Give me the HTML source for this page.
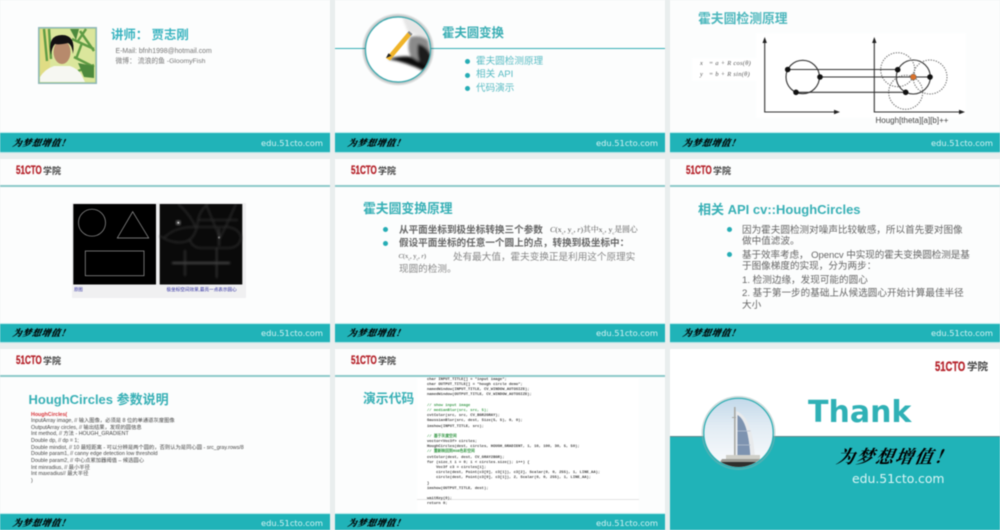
<!DOCTYPE html>
<html lang="zh"><head><meta charset="utf-8"><title>霍夫圆变换</title>
<style>
html,body{margin:0;padding:0;background:#e9eeee;width:1000px;height:530px;overflow:hidden}
#r{position:absolute;left:0;top:0;width:1000px;height:530px;overflow:hidden;filter:blur(.5px);font-family:"Liberation Sans","Noto Sans CJK SC",sans-serif}
#r div,#r svg{position:absolute}
.s{background:#fcfdfd}
.t{white-space:nowrap;line-height:1}
.f{width:330px;height:20.5px;background:#20b3b8;border-top:1px solid #c8eef0;border-bottom:1px solid #b5e3e5;box-sizing:border-box}
.u{font-family:"DejaVu Sans",sans-serif;font-size:8.3px;color:#d6f2f3;left:261px;top:5.5px;white-space:nowrap;line-height:1}
.g{font-family:"Noto Serif CJK SC",serif;font-size:9px;font-style:italic;font-weight:700;-webkit-text-stroke:.2px #000;color:#000;left:13px;top:4.5px;letter-spacing:.6px;white-space:nowrap;line-height:1;transform:skewX(-10deg)}
.l{height:2px;width:330px;background:#8cc9ca}
.h{font-weight:700;color:#38b0b6;font-size:12.8px}
.d{width:5px;height:5px;border-radius:50%;background:#26adb5}
.b{color:#666;font-size:9.6px}
.c51{color:#b5222a;font-weight:700;font-size:11.5px;-webkit-text-stroke:.3px #b5222a;transform:scaleX(.7);transform-origin:0 0;line-height:1;font-family:"Liberation Sans",sans-serif}
.cx{color:#444;font-weight:700;font-size:9px;line-height:1}
.p{font-size:5.3px;color:#444}
.m{font-family:"Liberation Mono",monospace;font-size:3.8px;color:#444;font-weight:700;white-space:pre;line-height:1;left:427px}
</style></head><body><div id="r">

<div class="s" style="left:0;top:0;width:330px;height:153px"></div>
<div class="s" style="left:335px;top:0;width:330px;height:153px"></div>
<div class="s" style="left:670px;top:0;width:330px;height:153px"></div>
<div class="s" style="left:0;top:159px;width:330px;height:184px"></div>
<div class="s" style="left:335px;top:159px;width:330px;height:184px"></div>
<div class="s" style="left:670px;top:159px;width:330px;height:184px"></div>
<div class="s" style="left:0;top:349px;width:330px;height:181px"></div>
<div class="s" style="left:335px;top:349px;width:330px;height:181px"></div>

<!-- footers -->
<div class="f" style="left:0;top:132px"><div class="t g">为梦想增值！</div><div class="u">edu.51cto.com</div></div>
<div class="f" style="left:335px;top:132px"><div class="t g">为梦想增值！</div><div class="u">edu.51cto.com</div></div>
<div class="f" style="left:670px;top:132px"><div class="t g">为梦想增值！</div><div class="u">edu.51cto.com</div></div>
<div class="f" style="left:0;top:322.5px"><div class="t g">为梦想增值！</div><div class="u">edu.51cto.com</div></div>
<div class="f" style="left:335px;top:322.5px"><div class="t g">为梦想增值！</div><div class="u">edu.51cto.com</div></div>
<div class="f" style="left:670px;top:322.5px"><div class="t g">为梦想增值！</div><div class="u">edu.51cto.com</div></div>
<div class="f" style="left:0;top:512.5px"><div class="t g">为梦想增值！</div><div class="u">edu.51cto.com</div></div>
<div class="f" style="left:335px;top:512.5px"><div class="t g">为梦想增值！</div><div class="u">edu.51cto.com</div></div>

<!-- logos + header lines -->
<div class="t c51" style="left:15.5px;top:166px">51CTO</div><div class="t cx" style="left:43px;top:167px">学院</div><div class="l" style="left:0;top:185px"></div>
<div class="t c51" style="left:350.5px;top:166px">51CTO</div><div class="t cx" style="left:378px;top:167px">学院</div><div class="l" style="left:335px;top:185px"></div>
<div class="t c51" style="left:685.5px;top:166px">51CTO</div><div class="t cx" style="left:713px;top:167px">学院</div><div class="l" style="left:670px;top:185px"></div>
<div class="t c51" style="left:15.5px;top:356px">51CTO</div><div class="t cx" style="left:43px;top:357px">学院</div><div class="l" style="left:0;top:375px"></div>
<div class="t c51" style="left:350.5px;top:356px">51CTO</div><div class="t cx" style="left:378px;top:357px">学院</div><div class="l" style="left:335px;top:375px"></div>

<!-- slide 1 -->
<svg style="left:38px;top:27px" width="59" height="57" viewBox="0 0 59 57">
<rect x=".7" y=".7" width="57.6" height="55.6" fill="#b9d48a" stroke="#8fb9b9" stroke-width="1.4"/>
<rect x="2" y="2" width="55" height="53" fill="#dbe69c"/>
<path d="M2 2h10v53H2z" fill="#e0dc84"/>
<path d="M6 2l3 32M11 2l2 30M42 4l14 20M36 30l20 10M34 12l22 10M44 16l-6 16M40 44l16-6M48 2l-8 12" stroke="#5f9c44" stroke-width="2.4" fill="none"/>
<path d="M40 36l16 3v12l-10-1zM32 2h9l-3 11z" fill="#4d8a3d"/>
<path d="M2 55v-5q5-8 14-11l16 0q8 3 11 8l4 8z" fill="#f6f7f2"/>
<ellipse cx="24" cy="25" rx="8.5" ry="12" fill="#b78a6c"/>
<path d="M13 28q-4-20 11-20q14 0 11 19q-1-9-5-11q-9 2-13 1q-3 3-4 11z" fill="#121012"/>
</svg>
<div class="t h" style="left:111px;top:28.5px;color:#3ab4c0;font-size:12.4px">讲师： 贾志刚</div>
<div class="t" style="left:115.5px;top:49px;font-size:6.9px;color:#777">E-Mail: bfnh1998@hotmail.com</div>
<div class="t" style="left:115.5px;top:58.5px;font-size:6.8px;color:#777">微博： 流浪的鱼 -GloomyFish</div>

<!-- slide 2 -->
<div style="left:335px;top:48px;width:330px;height:1px;background:#35afb5"></div>
<svg style="left:360px;top:10px" width="76" height="78" viewBox="0 0 76 78">
<defs>
<radialGradient id="rg"><stop offset=".84" stop-color="#3f6a6c" stop-opacity=".55"/><stop offset="1" stop-color="#000" stop-opacity="0"/></radialGradient>
<filter id="bl"><feGaussianBlur stdDeviation="1.2"/></filter>
</defs>
<circle cx="38" cy="39.5" r="36.5" fill="url(#rg)"/>
<circle cx="38" cy="39.5" r="32.5" fill="#fff" stroke="#38a9ae" stroke-width="1.2"/>
<clipPath id="cc"><circle cx="38" cy="39.5" r="32"/></clipPath>
<g clip-path="url(#cc)">
<g filter="url(#bl)">
<path d="M42 6l26 0 4 24-12-4-12-4-4-10z" fill="#e6e6e6"/>
<path d="M50 27q10-3 18 3l6 32-10 0q-8-8-12-13q-6-10-2-22z" fill="#8a8a8a"/>
<path d="M58 34q10 2 14 14l-2 14-8-6q-6-8-4-22z" fill="#1c1c1c"/>
<path d="M28 49q16-4 24-2l16 10-4 4q-18-9-36-12z" fill="#111"/>
</g>
<path d="M26 48l21.5-25.5 3.5 3-21 25z" fill="#f0b429"/>
<path d="M47.5 22.5l1.5-1.5 3.5 3-1.5 2z" fill="#888"/>
<path d="M26 48l2.5-4.8 3 2.5z" fill="#222"/>
</g></svg>
<div class="t h" style="left:442px;top:27px;color:#3aaeb4;font-size:12.4px">霍夫圆变换</div>
<div class="d" style="left:464.5px;top:59px"></div><div class="t" style="left:476px;top:56.5px;font-size:9.6px;color:#5abcc4">霍夫圆检测原理</div>
<div class="d" style="left:464.5px;top:72.5px"></div><div class="t" style="left:476px;top:70px;font-size:9.6px;color:#5abcc4">相关 API</div>
<div class="d" style="left:464.5px;top:86px"></div><div class="t" style="left:476px;top:83.5px;font-size:9.6px;color:#5abcc4">代码演示</div>

<!-- slide 3 -->
<div class="t h" style="left:698px;top:12.5px;color:#4db7bd">霍夫圆检测原理</div>
<div style="left:692px;top:58px;width:64px;height:23px;background:#fff"></div>
<div class="t" style="left:700px;top:61px;font-family:'Liberation Serif',serif;font-size:6.4px;color:#555;font-style:italic;letter-spacing:.3px">x &nbsp; = a + R cos(θ)</div>
<div class="t" style="left:700px;top:72px;font-family:'Liberation Serif',serif;font-size:6.4px;color:#555;font-style:italic;letter-spacing:.3px">y &nbsp; = b + R sin(θ)</div>
<svg style="left:756px;top:33px" width="210" height="85" viewBox="756 33 210 85">
<rect x="756" y="33" width="210" height="85" fill="#fff"/>
<g fill="none" stroke="#333" stroke-width="1.1">
<path d="M764.7 40V112H836M874.3 40V112H962"/>
<circle cx="802.7" cy="77" r="16.7"/><circle cx="913.3" cy="77" r="17"/>
<g stroke-dasharray="1.3 1.3" stroke="#666" stroke-width="1"><circle cx="897.7" cy="69.7" r="17"/><circle cx="930" cy="77" r="17"/><circle cx="905.7" cy="92.3" r="17"/></g>
<path d="M787.7 69.5H897.7M820 77H930M796 92.3H905.7"/>
</g>
<path d="M764.7 37l-2.2 6h4.4zM874.3 37l-2.2 6h4.4zM840 112l-6-2.2v4.4zM965 112l-6-2.2v4.4z" fill="#222"/>
<g fill="#111"><circle cx="787.7" cy="69.5" r="2.8"/><circle cx="820" cy="77" r="2.8"/><circle cx="796" cy="92.3" r="2.8"/><circle cx="897.7" cy="69.7" r="2.8"/><circle cx="930" cy="77" r="2.8"/><circle cx="905.7" cy="92.3" r="2.8"/></g>
<circle cx="913.3" cy="77" r="3" fill="#d9702a" stroke="#555" stroke-width=".5"/>
</svg>
<div class="t" style="left:875.5px;top:116.5px;font-size:8px;color:#444">Hough[theta][a][b]++</div>

<!-- slide 4 -->
<div style="left:72px;top:203px;width:174px;height:95px;background:#f0f0f1"></div>
<svg style="left:73px;top:204px" width="170" height="81" viewBox="73 204 170 81">
<defs><filter id="b2" x="-10%" y="-10%" width="120%" height="120%"><feGaussianBlur stdDeviation="1"/></filter></defs>
<rect x="73.3" y="204" width="82.7" height="80.5" fill="#000"/><rect x="159.7" y="204" width="82.6" height="80.5" fill="#0a0a0a"/>
<g fill="none" stroke="#999" stroke-width=".7"><circle cx="92" cy="222.7" r="13.5"/><path d="M132.7 211.7L117.3 238H148.7Z"/><rect x="85.3" y="251" width="58.7" height="24.7"/></g>
<g filter="url(#b2)" fill="none" stroke="#2a2a2a" stroke-width="1.6"><path d="M160 236q12 8 24 6t14-22q2-10 10-16M178 204q12 10 18 24M206 204q8 20 14 34l6-12 10-22M198 220h40M164 238q10-11 30-11h34q12 2 13 11q-2 10-13 10h-28q-8-1-10-8"/></g>
<g filter="url(#b2)"><path d="M172 263h58" stroke="#4a4a4a" stroke-width="2"/><path d="M185 250v26M216.7 248v30M219 228v18" stroke="#3a3a3a" stroke-width="1.4"/></g>
<circle cx="178.3" cy="222.7" r="2.6" fill="#666" filter="url(#b2)"/><circle cx="178.3" cy="222.7" r=".8" fill="#eee"/><circle cx="219" cy="237.5" r="1.1" fill="#777"/>
</svg>
<div class="t" style="left:74px;top:287.5px;font-size:4.4px;color:#2b2ba0">原图</div>
<div class="t" style="left:166.5px;top:287.5px;font-size:4.6px;color:#2b2ba0">极坐标空间效果,最亮一点表示圆心</div>

<!-- slide 5 -->
<div class="t h" style="left:363px;top:203px">霍夫圆变换原理</div>
<div class="d" style="left:383px;top:227px"></div>
<div class="t b" style="left:399px;top:225.5px;font-weight:700">从平面坐标到极坐标转换三个参数</div>
<div class="t" style="left:550px;top:226px;font-family:'Liberation Serif','Noto Serif CJK SC',serif;font-size:7.8px;color:#555"><i>C</i>(x<sub style="font-size:4.5px">c</sub>, y<sub style="font-size:4.5px">c</sub>, <i>r</i>)其中x<sub style="font-size:4.5px">c</sub>, y<sub style="font-size:4.5px">c</sub>是圆心</div>
<div class="d" style="left:383px;top:240.5px"></div>
<div class="t b" style="left:399px;top:239px;font-weight:700">假设平面坐标的任意一个圆上的点，转换到极坐标中：</div>
<div class="t" style="left:398.5px;top:253.5px;font-family:'Liberation Serif',serif;font-size:6.5px;color:#555"><i>C</i>(x<sub style="font-size:3.8px">c</sub>, y<sub style="font-size:3.8px">c</sub>, <i>r</i>)</div>
<div class="t b" style="left:453px;top:252.5px;color:#888">处有最大值，霍夫变换正是利用这个原理实</div>
<div class="t b" style="left:399px;top:264.5px;color:#888">现圆的检测。</div>

<!-- slide 6 -->
<div class="t h" style="left:698px;top:202.5px;font-size:13px">相关 API cv::HoughCircles</div>
<div class="d" style="left:727px;top:226.5px"></div>
<div class="t b" style="left:742px;top:226px">因为霍夫圆检测对噪声比较敏感，所以首先要对图像</div>
<div class="t b" style="left:742px;top:237px">做中值滤波。</div>
<div class="d" style="left:727px;top:251.5px"></div>
<div class="t b" style="left:742px;top:251px;letter-spacing:-.09px">基于效率考虑， Opencv 中实现的霍夫变换圆检测是基</div>
<div class="t b" style="left:742px;top:262px">于图像梯度的实现，分为两步：</div>
<div class="t b" style="left:742px;top:276px">1. 检测边缘，发现可能的圆心</div>
<div class="t b" style="left:742px;top:289px">2. 基于第一步的基础上从候选圆心开始计算最佳半径</div>
<div class="t b" style="left:742px;top:301px">大小</div>

<!-- slide 7 -->
<div class="t h" style="left:28.5px;top:392.5px;font-size:13px">HoughCircles 参数说明</div>
<div class="t p" style="left:31px;top:412.5px;color:#d8353a;font-weight:700">HoughCircles(</div>
<div class="t p" style="left:31px;top:419px">InputArray image, // 输入图像，必须是 8 位的单通道灰度图像</div>
<div class="t p" style="left:31px;top:425.5px">OutputArray circles, // 输出结果，发现的圆信息</div>
<div class="t p" style="left:31px;top:432px">Int method, // 方法 - HOUGH_GRADIENT</div>
<div class="t p" style="left:31px;top:439px">Double dp, // dp = 1;</div>
<div class="t p" style="left:31px;top:445.5px">Double mindist, // 10 最短距离 - 可以分辨是两个圆的，否则认为是同心圆 - src_gray.rows/8</div>
<div class="t p" style="left:31px;top:452px">Double param1, // canny edge detection low threshold</div>
<div class="t p" style="left:31px;top:458.5px">Double param2, // 中心点累加器阈值 – 候选圆心</div>
<div class="t p" style="left:31px;top:465.5px">Int minradius, // 最小半径</div>
<div class="t p" style="left:31px;top:472px">Int maxradius// 最大半径</div>
<div class="t p" style="left:31px;top:478.5px">)</div>

<!-- slide 8 -->
<div class="t h" style="left:363px;top:392.5px">演示代码</div>
<div style="left:416.5px;top:378px;width:222px;height:134px;background:#fff"></div>
<div style="left:416.5px;top:498.5px;width:222px;height:.6px;background:#e3e3e3"></div>
<div class="m" style="top:378.5px">char INPUT_TITLE[] = "input image";</div>
<div class="m" style="top:383.7px">char OUTPUT_TITLE[] = "hough circle demo";</div>
<div class="m" style="top:388.9px">namedWindow(INPUT_TITLE, CV_WINDOW_AUTOSIZE);</div>
<div class="m" style="top:394.1px">namedWindow(OUTPUT_TITLE, CV_WINDOW_AUTOSIZE);</div>
<div class="m" style="top:404.7px;color:#3a9a4a">// show input image</div>
<div class="m" style="top:409.9px;color:#3a9a4a">// medianBlur(src, src, 5);</div>
<div class="m" style="top:415.1px">cvtColor(src, src, CV_BGR2GRAY);</div>
<div class="m" style="top:420.3px">GaussianBlur(src, dest, Size(5, 5), 0, 0);</div>
<div class="m" style="top:425.5px">imshow(INPUT_TITLE, src);</div>
<div class="m" style="top:435.8px;color:#3a9a4a">// 基于灰度空间</div>
<div class="m" style="top:441px">vector&lt;Vec3f&gt; circles;</div>
<div class="m" style="top:446.2px">HoughCircles(dest, circles, HOUGH_GRADIENT, 1, 10, 100, 30, 5, 50);</div>
<div class="m" style="top:451.4px;color:#3a9a4a">// 重新映回到RGB色彩空间</div>
<div class="m" style="top:456.6px">cvtColor(dest, dest, CV_GRAY2BGR);</div>
<div class="m" style="top:461.8px">for (size_t i = 0; i &lt; circles.size(); i++) {</div>
<div class="m" style="top:467px">    Vec3f c3 = circles[i];</div>
<div class="m" style="top:472.2px">    circle(dest, Point(c3[0], c3[1]), c3[2], Scalar(0, 0, 255), 1, LINE_AA);</div>
<div class="m" style="top:477.4px">    circle(dest, Point(c3[0], c3[1]), 2, Scalar(0, 0, 255), 1, LINE_AA);</div>
<div class="m" style="top:482.6px">}</div>
<div class="m" style="top:487.8px">imshow(OUTPUT_TITLE, dest);</div>
<div class="m" style="top:498.2px">waitKey(0);</div>
<div class="m" style="top:503.4px">return 0;</div>

<!-- slide 9 -->
<div style="left:670px;top:349px;width:330px;height:87px;background:#fff"></div>
<div style="left:670px;top:436px;width:330px;height:94px;background:#20b3b8;border-top:1.5px solid #5f8a8c;box-sizing:border-box"></div>
<div class="t c51" style="left:935px;top:360px;font-size:13.5px">51CTO</div><div class="t cx" style="left:967px;top:361.5px;font-size:10.5px">学院</div>
<div class="t" style="left:808px;top:398px;font-family:'DejaVu Sans',sans-serif;font-weight:700;font-size:30px;color:#30b1b6">Thank</div>
<svg style="left:700px;top:395px" width="78" height="76" viewBox="0 0 78 76">
<defs><linearGradient id="sky" x1="0" y1="0" x2="0" y2="1"><stop offset="0" stop-color="#c3d9ea"/><stop offset=".4" stop-color="#e2ecf4"/><stop offset="1" stop-color="#fbfcfd"/></linearGradient></defs>
<circle cx="38.5" cy="38" r="37" fill="#8fb0b0" opacity=".45"/>
<circle cx="38.5" cy="38" r="34.7" fill="url(#sky)" stroke="#28adb2" stroke-width="1.2"/>
<clipPath id="cb"><circle cx="38.5" cy="38" r="34"/></clipPath>
<g clip-path="url(#cb)">
<path d="M34 12h1.6v52h-1.6zM32 22h7v1h-7z" fill="#a9a9a4"/>
<path d="M36 16q17 6 19 48H36z" fill="#e8eaec"/>
<path d="M37.5 20q11 6 13 44H37.5z" fill="#7d93b0"/>
<path d="M37.5 36h13M37.5 50h13" stroke="#b8c4d2" stroke-width=".8"/>
<path d="M26 60h34v4H26z" fill="#cfcfc8"/>
<path d="M22 64h48l2 3H20z" fill="#9a9a94"/>
<path d="M20 67h52v10H20z" fill="#2e2e2c"/>
</g></svg>
<div class="t" style="left:837px;top:447px;font-family:'Noto Serif CJK SC',serif;font-size:18px;font-style:italic;font-weight:700;letter-spacing:1.5px;color:#000;transform:skewX(-10deg)">为梦想增值！</div>
<div class="t" style="left:852px;top:473px;font-family:'DejaVu Sans',sans-serif;font-size:12.4px;color:#dcf5f5">edu.51cto.com</div>

</div></body></html>
